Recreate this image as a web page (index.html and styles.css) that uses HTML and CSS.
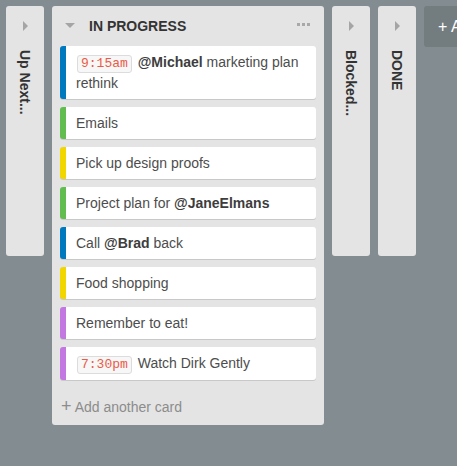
FILE: index.html
```html
<!DOCTYPE html>
<html>
<head>
<meta charset="utf-8">
<link rel="stylesheet" href="styles.css">
</head>
<body>
<div class="board">
  <div class="list collapsed">
    <span class="tri-right"></span>
    <span class="vtitle">Up Next...</span>
  </div>
  <div class="list open">
    <div class="list-header">
      <span class="tri-down"></span>
      <span class="title">IN PROGRESS</span>
      <span class="dots"><i></i><i></i><i></i></span>
    </div>
    <div class="cards">
      <div class="card blue"><span class="time">9:15am</span> <b>@Michael</b> marketing plan rethink</div>
      <div class="card green">Emails</div>
      <div class="card yellow">Pick up design proofs</div>
      <div class="card green">Project plan for <b>@JaneElmans</b></div>
      <div class="card blue">Call <b>@Brad</b> back</div>
      <div class="card yellow">Food shopping</div>
      <div class="card purple">Remember to eat!</div>
      <div class="card purple"><span class="time">7:30pm</span> Watch Dirk Gently</div>
    </div>
    <div class="add-card"><span class="plus">+</span> Add another card</div>
  </div>
  <div class="list collapsed">
    <span class="tri-right"></span>
    <span class="vtitle">Blocked...</span>
  </div>
  <div class="list collapsed">
    <span class="tri-right"></span>
    <span class="vtitle">DONE</span>
  </div>
  <div class="add-list">+ Add another list</div>
</div>
</body>
</html>
```
FILE: styles.css
```css
html, body {
  margin: 0;
  padding: 0;
  background: #838c91;
  height: 100%;
  overflow: hidden;
}
body {
  font-family: "Liberation Sans", Arial, sans-serif;
  font-size: 14px;
  color: #4d4d4d;
}
.board {
  display: flex;
  align-items: flex-start;
  gap: 8px;
  padding: 6px;
  white-space: nowrap;
  overflow: hidden;
}
.list {
  background: #e4e4e4;
  border-radius: 3px;
  flex: none;
}
.collapsed {
  width: 38px;
  height: 250px;
  display: flex;
  flex-direction: column;
  align-items: center;
  padding-top: 15px;
  box-sizing: border-box;
}
.tri-right {
  width: 0;
  height: 0;
  border-top: 5px solid transparent;
  border-bottom: 5px solid transparent;
  border-left: 5px solid #a5a5a5;
  margin-left: 1px;
}
.vtitle {
  writing-mode: vertical-rl;
  font-weight: bold;
  color: #333;
  margin-top: 19px;
  line-height: 18px;
}
.open {
  width: 272px;
  padding: 0 8px 8px;
  box-sizing: border-box;
}
.list-header {
  height: 40px;
  display: flex;
  align-items: center;
}
.tri-down {
  width: 0;
  height: 0;
  border-left: 5px solid transparent;
  border-right: 5px solid transparent;
  border-top: 5px solid #a5a5a5;
  margin-left: 5px;
  margin-top: -2px;
}
.title {
  font-weight: bold;
  color: #333;
  margin-left: 14px;
  margin-top: -1px;
}
.dots {
  margin-left: auto;
  margin-right: 6px;
  display: flex;
  gap: 2px;
  margin-top: -3px;
}
.dots i {
  width: 3px;
  height: 3px;
  background: #a8a8a8;
}
.cards {
  display: flex;
  flex-direction: column;
  gap: 8px;
}
.card {
  background: #fff;
  border-radius: 3px;
  box-shadow: 0 1px 0 #c8c8c8;
  border-left: 6px solid #ccc;
  padding: 6px 8px 6px 10px;
  line-height: 20px;
  white-space: normal;
}
.card b {
  color: #3d3d3d;
}
.blue { border-left-color: #0079bf; }
.green { border-left-color: #61bd4f; }
.yellow { border-left-color: #f2d600; }
.purple { border-left-color: #c377e0; }
.time {
  display: inline-block;
  font-family: "Liberation Mono", "DejaVu Sans Mono", monospace;
  font-size: 13px;
  line-height: 16px;
  color: #eb5a46;
  background: #f7f7f7;
  border: 1px solid #dcdcdc;
  border-radius: 3px;
  padding: 0 3px;
  margin-left: 1px;
  margin-right: 2px;
}
.add-card {
  margin-top: 16px;
  line-height: 20px;
  color: #8c8c8c;
  font-size: 14px;
}
.plus {
  font-size: 18px;
  margin-left: 1px;
}
.add-list {
  width: 200px;
  height: 41px;
  background: #737c7f;
  border-radius: 3px;
  color: #fff;
  line-height: 41px;
  padding-left: 14px;
  box-sizing: border-box;
  flex: none;
  font-size: 16px;
}
```
